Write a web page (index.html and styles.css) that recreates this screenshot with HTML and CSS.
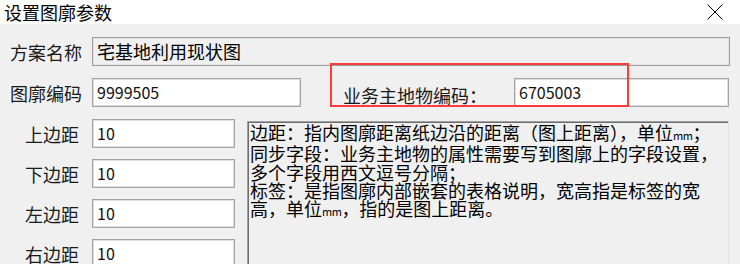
FILE: index.html
```html
<!DOCTYPE html>
<html lang="zh-CN">
<head>
<meta charset="utf-8">
<title>设置图廓参数</title>
<link rel="stylesheet" href="styles.css">
</head>
<body>
<div class="window">
  <div class="titlebar">
    <span class="title">设置图廓参数</span>
    <svg class="close" width="16" height="16" viewBox="0 0 16 16" aria-hidden="true">
      <path d="M0.5 0.5 L15.5 15.5 M15.5 0.5 L0.5 15.5" stroke="#000" stroke-width="1" fill="none"/>
    </svg>
  </div>
  <div class="panel">
    <div class="row row-top">
      <span class="label">方案名称</span>
      <div class="field field-disabled field-name">宅基地利用现状图</div>
    </div>
    <div class="row row-top">
      <span class="label">图廓编码</span>
      <div class="field num field-code">9999505</div>
      <span class="label label-biz">业务主地物编码：</span>
      <div class="field num field-biz">6705003</div>
    </div>
    <div class="highlight"></div>
    <div class="lower">
      <div class="margins">
        <div class="row">
          <span class="label label-short">上边距</span>
          <div class="field num field-small">10</div>
        </div>
        <div class="row">
          <span class="label label-short">下边距</span>
          <div class="field num field-small">10</div>
        </div>
        <div class="row">
          <span class="label label-short">左边距</span>
          <div class="field num field-small">10</div>
        </div>
        <div class="row">
          <span class="label label-short">右边距</span>
          <div class="field num field-small">10</div>
        </div>
      </div>
      <div class="memo">
        <div>边距：指内图廓距离纸边沿的距离（图上距离），单位<span class="mm">mm</span>；</div>
        <div>同步字段：业务主地物的属性需要写到图廓上的字段设置，</div>
        <div>多个字段用西文逗号分隔；</div>
        <div>标签：是指图廓内部嵌套的表格说明，宽高指是标签的宽</div>
        <div>高，单位<span class="mm">mm</span>，指的是图上距离。</div>
      </div>
    </div>
  </div>
</div>
</body>
</html>
```

FILE: styles.css
```css
* {
  box-sizing: border-box;
}

html, body {
  margin: 0;
  padding: 0;
  width: 740px;
  height: 264px;
  overflow: hidden;
  background: #f0f0f0;
}

body {
  font-family: "Noto Sans CJK SC", "Noto Sans", sans-serif;
  color: #000;
}

.window {
  width: 740px;
  height: 264px;
  display: flex;
  flex-direction: column;
}

.titlebar {
  height: 31px;
  background: #fff;
  display: flex;
  align-items: flex-start;
  justify-content: space-between;
  padding: 0 17px 0 4px;
}

.title {
  font-size: 18px;
  line-height: 24px;
  color: #000;
}

.close {
  margin-top: 4px;
}

.panel {
  position: relative;
  flex: 1;
  padding-top: 13px;
  background: #f0f0f0;
}

.row {
  display: flex;
  align-items: center;
  height: 29px;
}

.row-top {
  margin-bottom: 12px;
}

.label {
  font-size: 18px;
  line-height: 24px;
  width: 92px;
  padding-left: 10px;
  white-space: nowrap;
  color: #1a1a1a;
}

.label-short {
  padding-left: 25px;
}

.label-biz {
  width: auto;
  padding-left: 0;
  margin-left: 42px;
  margin-right: 27px;
  position: relative;
  top: 2px;
}

.field {
  height: 29px;
  border: 1px solid #a3a3a3;
  box-shadow: inset 0 0 0 1px #dedede;
  background: #fff;
  padding-left: 4px;
  font-size: 18px;
  line-height: 27px;
  white-space: nowrap;
  overflow: hidden;
  color: #000;
}

.field-disabled {
  background: #f0f0f0;
  border-color: #9c9c9c;
  box-shadow: inset 0 0 0 1px #e4e4e4;
}

.num {
  font-size: 16px;
  color: #111;
}

.field-name {
  width: 638px;
}

.field-code {
  width: 209px;
}

.field-biz {
  width: 215px;
}

.field-small {
  width: 143px;
}

.highlight {
  position: absolute;
  left: 330px;
  top: 39px;
  width: 299px;
  height: 44px;
  border: 2px solid #ff3b3b;
  pointer-events: none;
}

.lower {
  display: flex;
  align-items: flex-start;
}

.margins {
  width: 235px;
  display: flex;
  flex-direction: column;
  gap: 11px;
}

.memo {
  margin-left: 12px;
  margin-top: 2px;
  width: 482px;
  height: 200px;
  border: 1px solid #a0a0a0;
  border-right-color: #e3e3e3;
  border-bottom-color: #e3e3e3;
  box-shadow: inset 1px 1px 0 #6d6d6d;
  background: #f0f0f0;
  padding: 1px 0 0 2px;
  font-size: 18px;
  line-height: 18.25px;
  color: #000;
  white-space: nowrap;
}

.mm {
  font-size: 11px;
  letter-spacing: -0.5px;
}
```
